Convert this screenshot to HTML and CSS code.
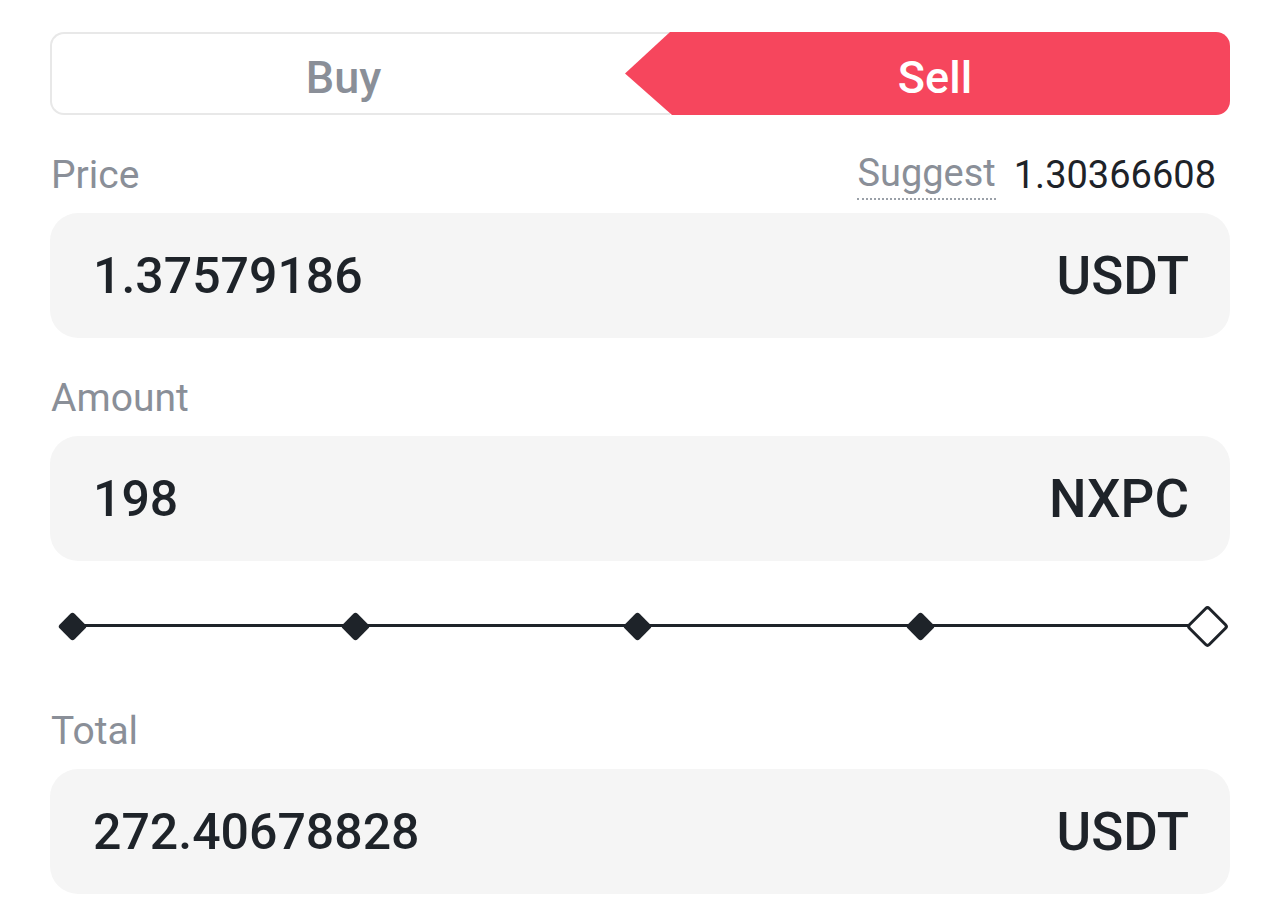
FILE: index.html
```html
<!DOCTYPE html>
<html>
<head>
<meta charset="utf-8">
<link rel="stylesheet" href="styles.css">
</head>
<body>
<div class="panel">
  <div class="toggle">
    <div class="buy">Buy</div>
    <div class="sell">Sell</div>
  </div>

  <div class="label-row">
    <span class="label">Price</span>
    <span class="suggest"><span class="suggest-key">Suggest</span><span class="suggest-val">1.30366608</span></span>
  </div>
  <div class="field">
    <span class="value">1.37579186</span>
    <span class="unit">USDT</span>
  </div>

  <div class="label-row">
    <span class="label">Amount</span>
  </div>
  <div class="field">
    <span class="value">198</span>
    <span class="unit">NXPC</span>
  </div>

  <div class="slider">
    <div class="track"></div>
    <span class="dot"></span>
    <span class="dot"></span>
    <span class="dot"></span>
    <span class="dot"></span>
    <span class="dot hollow"></span>
  </div>

  <div class="label-row">
    <span class="label">Total</span>
  </div>
  <div class="field">
    <span class="value">272.40678828</span>
    <span class="unit">USDT</span>
  </div>
</div>
</body>
</html>
```

FILE: styles.css
```css
* { box-sizing: border-box; }
html, body { margin: 0; padding: 0; background: #ffffff; }
body {
  font-family: Roboto, "Liberation Sans", sans-serif;
  color: #1e2329;
}
.panel {
  width: 1180px;
  margin-left: 50px;
  padding-top: 32px;
}
.toggle {
  display: flex;
  height: 83px;
}
.buy {
  flex: 1;
  margin-right: -45px;
  padding-right: 35px;
  padding-top: 8px;
  border: 2px solid #e8e8e8;
  border-right: none;
  border-radius: 14px 0 0 14px;
  display: flex;
  align-items: center;
  justify-content: center;
  font-size: 45px;
  font-weight: 500;
  color: #8a8f98;
}
.sell {
  position: relative;
  width: 605px;
  background: #f6465d;
  border-radius: 0 14px 14px 0;
  clip-path: polygon(45px 0, 100% 0, 100% 100%, 47px 100%, 0 50%);
  display: flex;
  align-items: center;
  justify-content: center;
  padding-left: 15px;
  padding-top: 8px;
  font-size: 45px;
  font-weight: 500;
  color: #ffffff;
}
.label-row {
  display: flex;
  justify-content: space-between;
  align-items: center;
  height: 98px;
  padding-top: 22px;
  font-size: 39px;
}
.label { color: #8a8f98; padding-left: 1px; }
.suggest { display: flex; align-items: center; gap: 18px; padding-right: 14px; font-size: 38px; }
.suggest-key {
  color: #8a8f98;
  border-bottom: 2px dotted #9aa0a8;
  line-height: 1.05;
  padding-bottom: 4px;
  margin-bottom: -4px;
}
.suggest-val { color: #1e2329; }
.field {
  height: 125px;
  background: #f5f5f5;
  border-radius: 28px;
  display: flex;
  align-items: center;
  justify-content: space-between;
  padding: 0 41px 0 43px;
  font-size: 50px;
  font-weight: 500;
  color: #1e2329;
}
.unit { font-size: 53px; }
.slider {
  position: relative;
  height: 110px;
  padding: 20px 12px 0 12px;
  display: flex;
  align-items: center;
  justify-content: space-between;
}
.track {
  position: absolute;
  left: 22px;
  right: 22px;
  top: 63px;
  height: 3px;
  background: #1e2329;
}
.dot {
  position: relative;
  width: 21px;
  height: 21px;
  background: #1e2329;
  transform: rotate(45deg);
  border-radius: 3px;
}
.dot.hollow {
  width: 31px;
  height: 31px;
  background: #ffffff;
  border: 3.5px solid #1e2329;
  border-radius: 4px;
  margin-right: -5px;
}
```
